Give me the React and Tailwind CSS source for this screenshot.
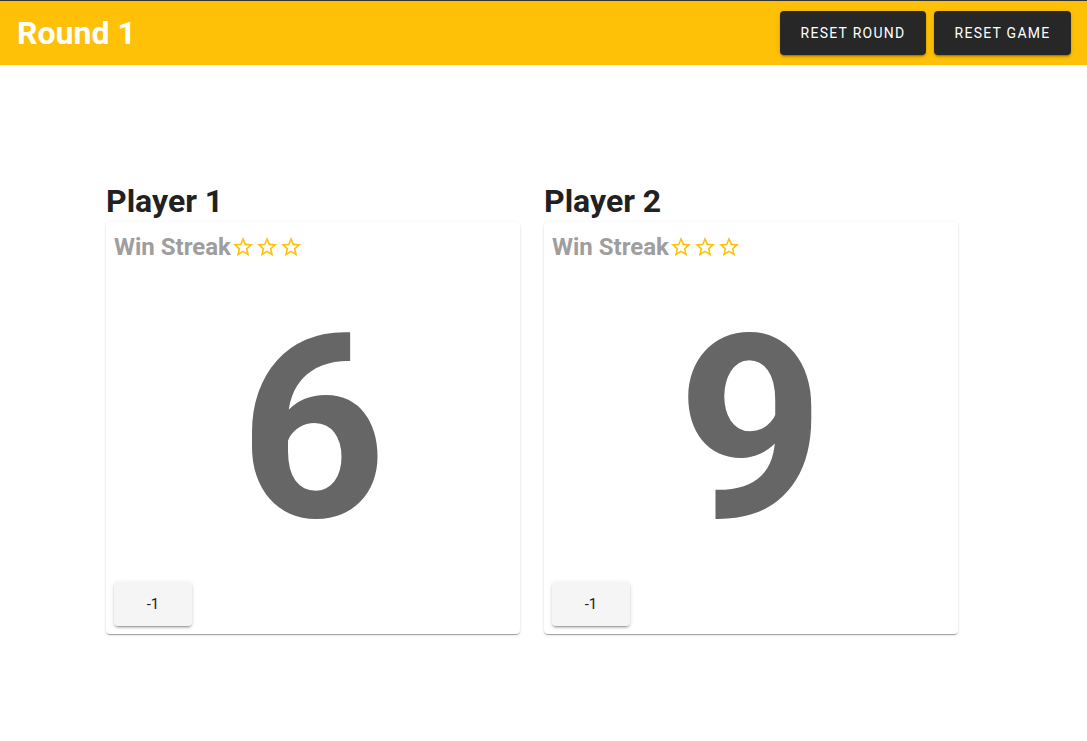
import React from 'react';

const StarBorder = () => (
  <svg viewBox="0 0 24 24" className="w-6 h-6" fill="#ffc107">
    <path d="M22 9.24l-7.19-.62L12 2 9.19 8.63 2 9.24l5.46 4.73L5.82 21 12 17.27 18.18 21l-1.63-7.03L22 9.24zM12 15.4l-3.76 2.27 1-4.28-3.32-2.88 4.38-.38L12 6.1l1.71 4.04 4.38.38-3.32 2.88 1 4.28L12 15.4z" />
  </svg>
);

const PlayerCard = ({ name, score }) => (
  <div className="w-[414px]">
    <h2 className="text-[32px] font-bold text-[#212121] leading-[36px]">{name}</h2>
    <div className="mt-[3px] h-[412px] bg-white rounded-[4px] shadow-[0_2px_1px_-1px_rgba(0,0,0,0.2),0_1px_1px_0_rgba(0,0,0,0.14),0_1px_3px_0_rgba(0,0,0,0.12)] p-2 flex flex-col">
      <div className="flex items-center h-[34px]">
        <span className="text-2xl font-bold text-[#9e9e9e]">Win Streak</span>
        <StarBorder />
        <StarBorder />
        <StarBorder />
      </div>
      <div className="flex-1 flex items-center justify-center pt-[14px]">
        <span className="text-[256px] font-bold text-[#666666] leading-none">{score}</span>
      </div>
      <div>
        <button className="w-[78px] h-[44px] bg-[#f5f5f5] rounded-[4px] text-[15px] text-[#212121] shadow-[0_3px_1px_-2px_rgba(0,0,0,0.2),0_2px_2px_0_rgba(0,0,0,0.14),0_1px_5px_0_rgba(0,0,0,0.12)]">
          -1
        </button>
      </div>
    </div>
  </div>
);

export default function App() {
  return (
    <div className="min-h-screen bg-white font-['Roboto',sans-serif]">
      <header className="h-[65px] bg-[#ffc107] border-t border-[#333] flex items-center justify-between pl-[17px] pr-4">
        <h1 className="text-[32px] font-bold text-white">Round 1</h1>
        <div className="flex gap-2">
          <button className="w-[146px] h-[44px] bg-[#272727] text-white text-sm font-normal tracking-[1.25px] rounded-[4px] shadow-[0_3px_1px_-2px_rgba(0,0,0,0.2),0_2px_2px_0_rgba(0,0,0,0.14),0_1px_5px_0_rgba(0,0,0,0.12)]">
            RESET ROUND
          </button>
          <button className="w-[137px] h-[44px] bg-[#272727] text-white text-sm font-normal tracking-[1.25px] rounded-[4px] shadow-[0_3px_1px_-2px_rgba(0,0,0,0.2),0_2px_2px_0_rgba(0,0,0,0.14),0_1px_5px_0_rgba(0,0,0,0.12)]">
            RESET GAME
          </button>
        </div>
      </header>
      <main className="pt-[118px] pl-[106px] flex gap-6">
        <PlayerCard name="Player 1" score="6" />
        <PlayerCard name="Player 2" score="9" />
      </main>
    </div>
  );
}
